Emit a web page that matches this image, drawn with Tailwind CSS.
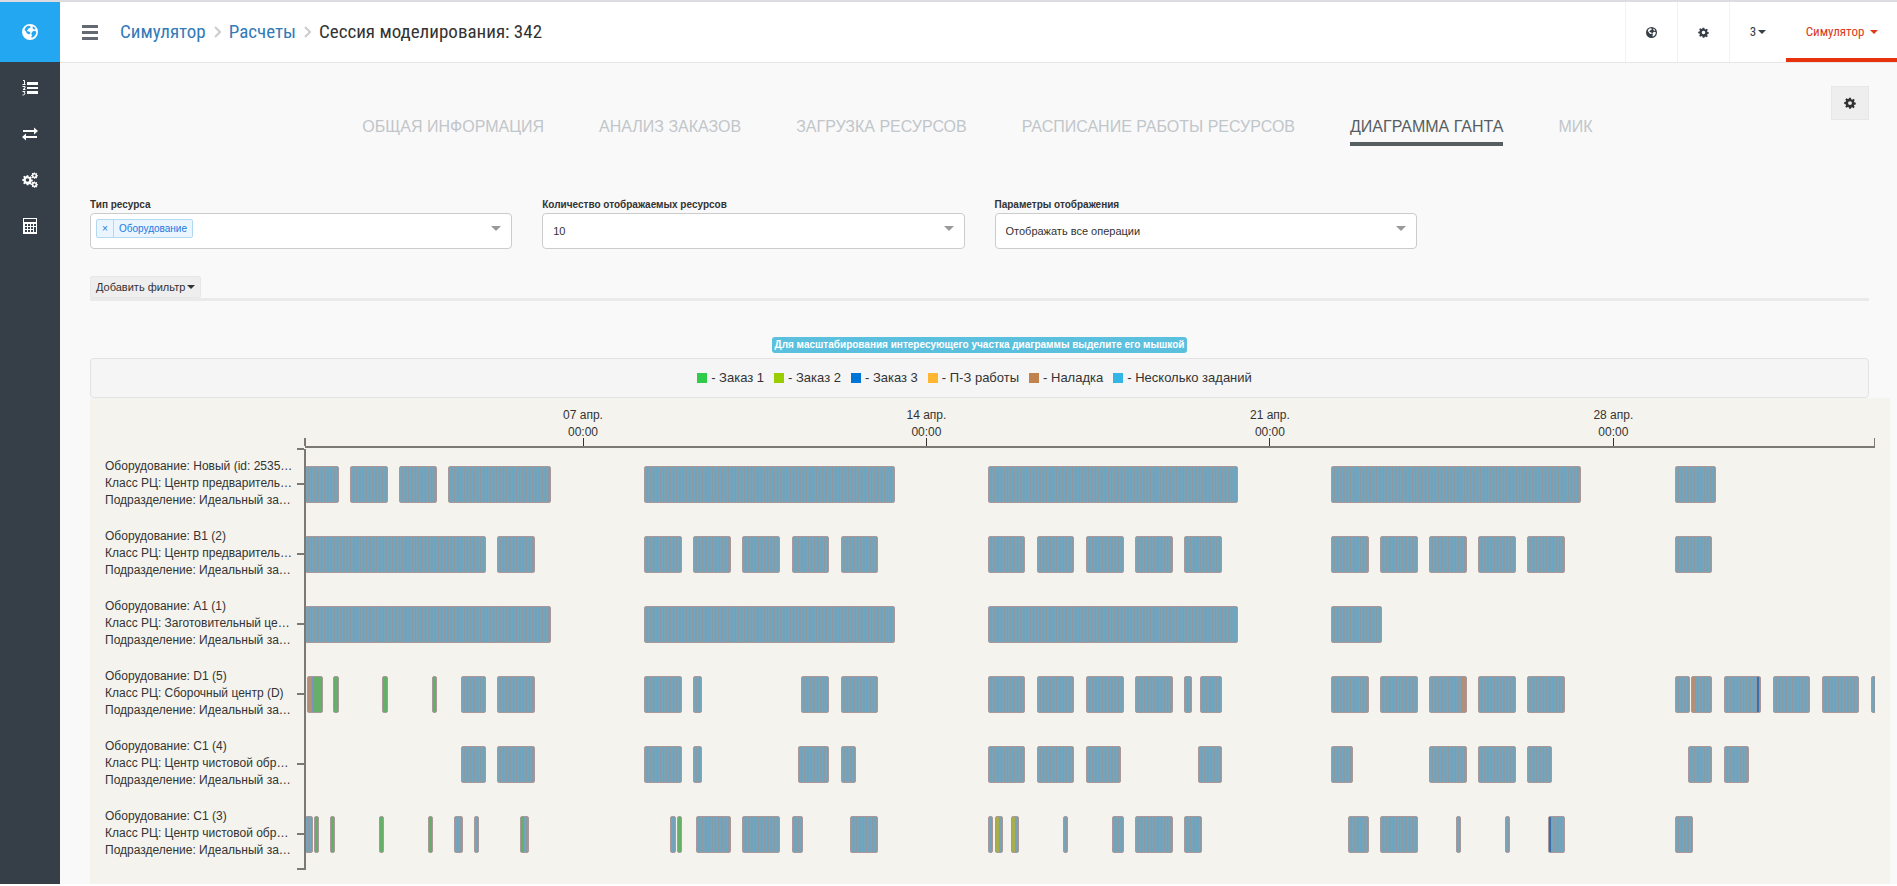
<!DOCTYPE html>
<html lang="ru">
<head>
  <meta charset="UTF-8" />
  <title>Сессия моделирования: 342</title>
  <script src="https://cdn.jsdelivr.net/npm/@tailwindcss/browser@4"></script>
</head>
<body class="bg-white font-['Liberation_Sans',Arial,sans-serif] text-[#333] text-xs">
  <svg class="hidden">
    <symbol id="i-cog" viewBox="0 0 16 16">
      <path fill-rule="evenodd" d="M6.8 1h2.4l.4 1.9 1.3.6 1.7-1.1 1.7 1.7-1.1 1.7.6 1.3 1.9.4v2.4l-1.9.3-.6 1.3 1.1 1.7-1.7 1.7-1.7-1.1-1.3.6L9.2 15.700H6.8l-.4-1.900-1.300-.6-1.700 1.100-1.700-1.700 1.100-1.700-.6-1.300L.3 9.200V6.800l1.900-.4.6-1.300-1.100-1.700 1.700-1.700 1.700 1.100 1.300-.6zM8 5.500a2.600 2.600 0 1 0 0 5.200 2.600 2.600 0 0 0 0-5.200z" />
    </symbol>
    <symbol id="i-globe" viewBox="0 0 16 16">
      <path fill-rule="evenodd" d="M8 0a8 8 0 1 0 0 16A8 8 0 0 0 8 0zM4 3l2-1.200 1.800.2 1 1-.9 1-1.500.4-.2 1.200-1.300.6.4 1.100 1.600.2 1.700 1.300-.8 1.200-1.300.3-1.900-1.400-.9-2-1.300-1zM10.500 7.500l2.200-.7 1.500 1-.3 2.200-1.800 2.600-2 1.200-.9-.8.9-1.800-.9-1.500zM10.800 2.300l1.900 1.200.9 1.700-1.600.3-1.400-1.300z" />
    </symbol>
  </svg>

  <div class="flex border-t-2 border-[#dcdce2]">
    <!-- Sidebar -->
    <nav class="w-[60px] shrink-0 bg-[#363e48] text-white flex flex-col">
      <a href="#" aria-label="Главная" class="h-[60px] flex items-center justify-center bg-[#23a7f0]">
        <svg class="w-4 h-4 fill-current"><use href="#i-globe" /></svg>
      </a>
      <div class="flex flex-col pt-[3px]">
        <a href="#" aria-label="Список" class="h-[46px] flex items-center justify-center">
          <svg class="w-4 h-4" viewBox="0 0 16 16" fill="currentColor">
            <path d="M5 2h11v3H5zM5 7h11v2H5zM5 11h11v3H5z" />
            <path d="M1 .5h1.500v4M.5 4.500h3M.5 6.500h2.500v1.500l-2 1.500h2.500M.5 11.500h2.500L2 13c1.500 0 1.500 2-1.500 2" fill="none" stroke="currentColor" />
          </svg>
        </a>
        <a href="#" aria-label="Обмен" class="h-[46px] flex items-center justify-center">
          <svg class="w-4 h-4" viewBox="0 0 16 16" fill="currentColor">
            <path d="M1 4h11V1.500L16 5l-4 3.500V6H1zM15 10H4V7.500L0 11l4 3.500V12h11z" />
          </svg>
        </a>
        <a href="#" aria-label="Настройки" class="h-[46px] flex items-center justify-center">
          <svg class="w-4 h-4 fill-current" viewBox="0 0 16 16">
            <use href="#i-cog" x="0" y="2" width="11" height="12" />
            <use href="#i-cog" x="9" y="0" width="7" height="7" />
            <use href="#i-cog" x="9" y="9" width="7" height="7" />
          </svg>
        </a>
        <a href="#" aria-label="Калькулятор" class="h-[46px] flex items-center justify-center">
          <svg class="w-4 h-4" viewBox="0 0 16 16" fill="currentColor">
            <path fill-rule="evenodd" d="M1 0h14v16H1zM2 1v3h12V1zM3 6v2h2V6zM6 6v2h2V6zM9 6v2h2V6zM12 6v2h2V6zM3 9v2h2V9zM6 9v2h2V9zM9 9v2h2V9zM3 12v2h2v-2zM6 12v2h2v-2zM9 12v2h2v-2zM12 9v5h2V9z" />
          </svg>
        </a>
      </div>
    </nav>

    <div class="flex-1 min-w-0 bg-[#f9f9f9]">
      <!-- Top bar -->
      <header class="h-[60px] flex items-stretch bg-white shadow-[0_1px_0_#e7e7e7] font-['Roboto_Condensed','Liberation_Sans_Narrow',Roboto,sans-serif]">
        <button aria-label="Меню" class="w-[60px] pl-[22px]">
          <svg class="w-4 h-4" viewBox="0 0 16 16" fill="#636970"><path d="M0 1h16v3H0zM0 7h16v3H0zM0 13h16v3H0z" /></svg>
        </button>
        <div class="flex-1 flex items-center gap-2 text-[19px]">
          <a href="#" class="text-[#337ab7]">Симулятор</a>
          <svg class="w-[7px] h-3" viewBox="0 0 7 12" fill="none" stroke="#ccc" stroke-width="2"><path d="M1 1l5 5-5 5" /></svg>
          <a href="#" class="text-[#337ab7]">Расчеты</a>
          <svg class="w-[7px] h-3" viewBox="0 0 7 12" fill="none" stroke="#ccc" stroke-width="2"><path d="M1 1l5 5-5 5" /></svg>
          <h1>Сессия моделирования: 342</h1>
        </div>
        <div class="flex text-[#363e48] text-[13px]">
          <button aria-label="Язык" class="w-[52px] flex items-center justify-center border-l border-[#f2f2f2]">
            <svg class="w-[11px] h-[11px] fill-current" ><use href="#i-globe" /></svg>
          </button>
          <button aria-label="Параметры" class="w-[52px] flex items-center justify-center border-l border-[#f2f2f2]">
            <svg class="w-[11px] h-[11px] fill-current"><use href="#i-cog" /></svg>
          </button>
          <button class="w-[57px] flex items-center justify-center gap-[2px] border-l border-[#f2f2f2]">
            3 <svg class="w-2 h-1 fill-current" viewBox="0 0 8 4"><path d="M0 0h8L4 4z" /></svg>
          </button>
          <button class="w-[111px] flex items-center justify-center gap-[6px] pt-1 pl-px border-b-4 border-[#e8320d] text-[#dd3a1b]">
            Симулятор <svg class="w-2 h-1 fill-current" viewBox="0 0 8 4"><path d="M0 0h8L4 4z" /></svg>
          </button>
        </div>
      </header>

      <main class="pl-[30px] pr-7">
        <!-- Tabs -->
        <div class="flex items-start pt-6">
          <nav class="flex-1 flex justify-center gap-[55px] pl-[34px] pt-[29px] text-base leading-6 text-[#c1c6ca]">
            <a href="#">ОБЩАЯ ИНФОРМАЦИЯ</a>
            <a href="#">АНАЛИЗ ЗАКАЗОВ</a>
            <a href="#">ЗАГРУЗКА РЕСУРСОВ</a>
            <a href="#">РАСПИСАНИЕ РАБОТЫ РЕСУРСОВ</a>
            <a href="#" class="text-[#565e61] border-b-4 border-[#565e61] pb-[3px]">ДИАГРАММА ГАНТА</a>
            <a href="#">МИК</a>
          </nav>
          <button aria-label="Настройки диаграммы" class="w-[38px] h-[34px] flex items-center justify-center bg-[#eee] border border-[#e7e7e7]">
            <svg class="w-3 h-3 fill-[#333]"><use href="#i-cog" /></svg>
          </button>
        </div>

        <!-- Filters -->
        <div class="grid grid-cols-4 gap-[30px] mt-[52px]">
          <div>
            <label for="type" class="block text-[10px] leading-[14px] font-bold">Тип ресурса</label>
            <div class="relative h-9 mt-px bg-white border border-[#ccc] rounded">
              <div class="flex w-fit m-[5px] h-[19px] text-[10px] leading-[17px] bg-[#ebf5ff] text-[#1a7ae0] border border-[#b3d9f2] rounded-xs">
                <button aria-label="Убрать" class="w-[17px] border-r border-[#b3d9f2]">×</button>
                <span class="px-[5px]">Оборудование</span>
              </div>
              <input id="type" class="absolute inset-y-0 left-28 right-8 outline-none" />
              <svg class="absolute right-[10px] top-3 w-[10px] h-[5px]" viewBox="0 0 10 5" fill="#999"><path d="M0 0h10L5 5z" /></svg>
            </div>
          </div>
          <div>
            <label for="count" class="block text-[10px] leading-[14px] font-bold">Количество отображаемых ресурсов</label>
            <div class="relative mt-px">
              <select id="count" class="appearance-none block w-full h-9 px-[10px] bg-white border border-[#ccc] rounded text-[11px]"><option>10</option></select>
              <svg class="absolute right-[11px] top-[13px] w-[10px] h-[5px]" viewBox="0 0 10 5" fill="#999"><path d="M0 0h10L5 5z" /></svg>
            </div>
          </div>
          <div>
            <label for="view" class="block text-[10px] leading-[14px] font-bold">Параметры отображения</label>
            <div class="relative mt-px">
              <select id="view" class="appearance-none block w-full h-9 px-[10px] bg-white border border-[#ccc] rounded text-[11px]"><option>Отображать все операции</option></select>
              <svg class="absolute right-[11px] top-[13px] w-[10px] h-[5px]" viewBox="0 0 10 5" fill="#999"><path d="M0 0h10L5 5z" /></svg>
            </div>
          </div>
        </div>

        <div class="mt-[27px] border-b-3 border-[#eaeaea]">
          <button class="flex items-center gap-[2px] h-[22px] px-[5px] bg-[#eee] border border-[#e7e7e7] rounded-xs text-[11px]">
            Добавить фильтр <svg class="w-2 h-1 fill-current" viewBox="0 0 8 4"><path d="M0 0h8L4 4z" /></svg>
          </button>
        </div>

        <div class="flex justify-center mt-9">
          <span class="h-4 px-[3px] rounded-[3px] bg-[#5bc0de] text-white text-[10px] leading-4 font-bold">Для масштабирования интересующего участка диаграммы выделите его мышкой</span>
        </div>

        <!-- Legend -->
        <div id="legend" class="flex items-center justify-center gap-[10px] h-10 mt-[5px] pr-[10px] bg-[#f5f5f5] border border-[#e3e3e3] rounded text-[13px]"></div>

        <!-- Gantt -->
        <div class="-mr-[21px] h-[486px] pr-[15px] bg-[#f4f3ed]">
          <div id="ticks" class="relative h-[50px] ml-[215px] border-b-2 border-[#7c7874]"></div>
          <div class="w-[7px] h-[2px] ml-[207px] -mb-px bg-[#7c7874]"></div>
          <div id="rows"></div>
          <div class="w-[9px] h-[2px] ml-[207px] -mt-px bg-[#7c7874]"></div>
        </div>
      </main>
    </div>
  </div>

  <script>
    // hours from 01.04 08:00, the axis is 32 days long
    const TOTAL = 768;

    const legend = [
      ['bg-[#2ecc4a]', 'Заказ 1'],
      ['bg-[#9acd00]', 'Заказ 2'],
      ['bg-[#0275d8]', 'Заказ 3'],
      ['bg-[#ffb733]', 'П-З работы'],
      ['bg-[#c0834d]', 'Наладка'],
      ['bg-[#33b5e5]', 'Несколько заданий']
    ];

    const ticks = [[136, '07 апр.'], [304, '14 апр.'], [472, '21 апр.'], [640, '28 апр.']];

    const colors = {
      g: 'bg-[#65af68]',
      o: 'bg-[#a9ad4b]',
      n: 'bg-[#3a70ae]',
      s: 'bg-[#b48e76]',
      p: 'bg-[#7b93bd]'
    };

    const DEP = 'Подразделение: Идеальный за…';

    // bar: [from, to, [color, from, to]...]
    const rows = [
      {
        name: ['Оборудование: Новый (id: 2535…', 'Класс РЦ: Центр предваритель…', DEP],
        bars: [[0, 16.4], [22, 40.4], [46, 64.4], [70, 120.4], [166, 288.4], [334, 456.4], [502, 624.4], [670, 690.2]]
      },
      {
        name: ['Оборудование: B1 (2)', 'Класс РЦ: Центр предваритель…', DEP],
        bars: [[0, 88.4], [94, 112.4],
          [166, 184.4], [190, 208.4], [214, 232.4], [238, 256.4], [262, 280.4],
          [334, 352.4], [358, 376.4], [382, 400.4], [406, 424.4], [430, 448.4],
          [502, 520.4], [526, 544.4], [550, 568.4], [574, 592.4], [598, 616.4], [670, 688.4]]
      },
      {
        name: ['Оборудование: A1 (1)', 'Класс РЦ: Заготовительный це…', DEP],
        bars: [[0, 120.4], [166, 288.4], [334, 456.4], [502, 527]]
      },
      {
        name: ['Оборудование: D1 (5)', 'Класс РЦ: Сборочный центр (D)', DEP],
        bars: [[1, 8.6, ['s', 1, 3.2], ['p', 3.2, 4.6], ['g', 4.6, 8.6]],
          [13.9, 16.4, ['g', 13.9, 16.4]], [37.9, 40.4, ['g', 37.9, 40.4]], [61.9, 64.4, ['g', 61.9, 64.4]],
          [76.3, 88.4], [94, 112.4],
          [166, 184.4], [190, 194], [242.6, 256.4], [262, 280.4],
          [334, 352.4], [358, 376.4], [382, 400.4], [406, 424.4], [430, 434], [438, 448.4],
          [502, 520.4], [526, 544.4], [550, 568.4, ['s', 566.4, 568.4]], [574, 592.4], [598, 616.4],
          [670, 677.3], [678, 688.4, ['s', 678, 680.2]], [694, 712.4, ['n', 710.6, 711.6]], [718, 736.4], [742, 760.4], [766, 770]]
      },
      {
        name: ['Оборудование: C1 (4)', 'Класс РЦ: Центр чистовой обр…', DEP],
        bars: [[76.3, 88.4], [94, 112.4],
          [166, 184.4], [190, 194], [241.2, 256.4], [262, 269.4],
          [334, 352.4], [358, 376.4], [382, 399], [436.6, 448.4],
          [502, 512.6], [550, 568.4], [574, 592.4], [598, 610.2],
          [676.5, 688.4], [694, 706.2]]
      },
      {
        name: ['Оборудование: C1 (3)', 'Класс РЦ: Центр чистовой обр…', DEP],
        bars: [[0, 3.8], [4.4, 6.9, ['g', 4.4, 6.9]], [12.2, 14.7, ['g', 12.2, 14.7]], [36.2, 38.8, ['g', 36.2, 38.8]],
          [60.3, 62.8, ['g', 60.3, 62.8]], [73.1, 77.2], [82.7, 85.3], [105.2, 109.4, ['g', 105.2, 107.4]],
          [178.7, 181.3], [182, 184.5, ['g', 182, 184.5]], [191.5, 208.4], [214, 232.4], [238, 243.6], [266.6, 280.4],
          [334, 336.7], [337.3, 341.5, ['o', 337.5, 339.5]], [345.3, 349.4, ['o', 345.5, 347.5]],
          [370.8, 373.4], [394.8, 400.4], [406, 424.4], [430, 439],
          [510, 520.4], [526, 544.4], [562.9, 565.4], [586.9, 589.4], [607.8, 616.4, ['n', 608, 609]], [670, 679]]
      }
    ];

    document.getElementById('legend').innerHTML = legend.map(([color, text]) =>
      `<span class="flex items-center gap-1"><i class="w-[10px] h-[10px] ${color}"></i>- ${text}</span>`).join('');

    const pct = h => (h / TOTAL * 100) + '%';

    document.getElementById('ticks').innerHTML =
      ticks.map(([h, day]) =>
        `<div class="absolute bottom-0 w-16 -ml-8 flex flex-col items-center text-center leading-[17px]" style="left:${pct(h)}">
          <span>${day}</span><span>00:00</span><i class="w-px h-2 -mt-[3px] bg-[#333]"></i>
        </div>`).join('') +
      '<i class="absolute -left-px bottom-0 w-[2px] h-2 bg-[#7c7874]"></i><i class="absolute right-0 bottom-0 w-px h-2 bg-[#7c7874]"></i>';

    document.getElementById('rows').innerHTML = rows.map(row => `
      <div class="flex h-[70px] items-stretch">
        <div class="w-[207px] pl-[15px] pb-[2px] self-center leading-[17px] whitespace-nowrap">${row.name.map(n => `<div>${n}</div>`).join('')}</div>
        <div class="w-[7px] h-[2px] self-center bg-[#7c7874]"></div>
        <div class="w-[2px] -mr-px relative z-10 bg-[#7c7874]"></div>
        <div class="relative flex-1 overflow-hidden">
          ${row.bars.map(([from, to, ...parts]) => `
            <div class="absolute top-[17px] h-[37px] rounded-xs border border-[#a8989a] overflow-hidden bg-[repeating-linear-gradient(90deg,#74a5bc_0px_2px,#8b9aa2_2px_3px,#74a5bc_3px_5px,#8b9aa2_5px_6px,#74a5bc_6px_8px,#8b9aa2_8px_9px,#78a3b7_9px_10px,#6ba7c4_10px_12px,#8b9aa2_12px_13px)]" style="left:${pct(from)};width:${pct(to - from)}">
              ${parts.map(([c, a, b]) => `<i class="absolute inset-y-0 ${colors[c]}" style="left:${(a - from) / (to - from) * 100}%;width:${(b - a) / (to - from) * 100}%"></i>`).join('')}
            </div>`).join('')}
        </div>
      </div>`).join('');
  </script>
</body>
</html>
